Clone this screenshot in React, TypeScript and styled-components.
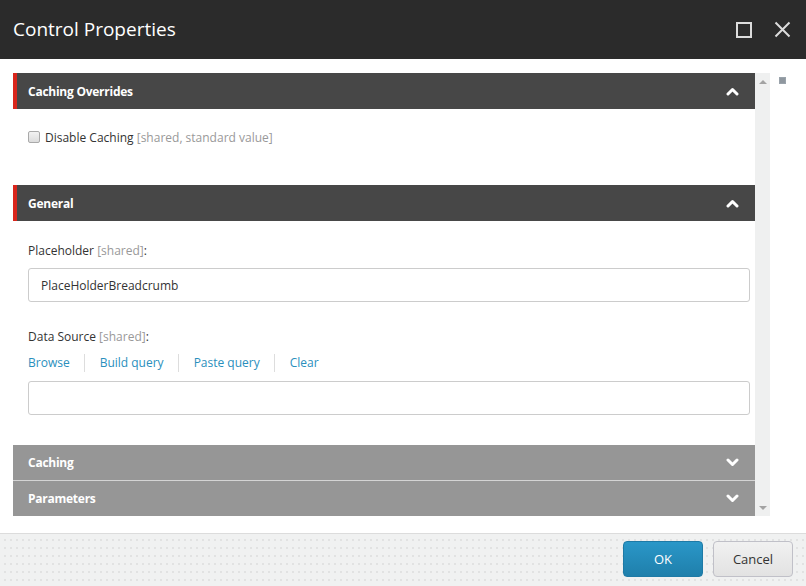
import React from 'react';
import styled, { createGlobalStyle } from 'styled-components';

const GlobalStyle = createGlobalStyle`
  html, body {
    margin: 0;
    padding: 0;
    background: #fff;
  }
  body {
    font-family: 'Open Sans', 'Noto Sans', sans-serif;
    color: #333;
  }
  * {
    box-sizing: border-box;
  }
`;

const Dialog = styled.div`
  width: 806px;
  height: 586px;
  display: flex;
  flex-direction: column;
  overflow: hidden;
`;

const Header = styled.div`
  height: 59px;
  flex-shrink: 0;
  background: #2b2b2b;
  display: flex;
  align-items: center;
  justify-content: space-between;
  padding: 0 15px 0 13px;
`;

const Title = styled.h1`
  margin: 0 0 2px;
  font-size: 19px;
  font-weight: 400;
  color: #fff;
`;

const HeaderTools = styled.div`
  display: flex;
  align-items: center;
  gap: 20px;
`;

const ToolButton = styled.button`
  width: 18px;
  height: 18px;
  padding: 0;
  border: 0;
  background: transparent;
  display: flex;
  align-items: center;
  justify-content: center;
  cursor: pointer;
`;

const Body = styled.div`
  flex: 1;
  background: #fff;
  display: flex;
  align-items: flex-start;
  padding: 14px 0 0 13px;
  gap: 9px;
`;

const ScrollPane = styled.div`
  width: 757px;
  height: 443px;
  display: flex;
`;

const Content = styled.div`
  width: 742px;
  overflow: hidden;
`;

const Scrollbar = styled.div`
  width: 15px;
  background: #eff0f0;
  display: flex;
  flex-direction: column;
  justify-content: space-between;
  align-items: center;
  padding: 7px 0 6px;
`;

const Arrow = styled.div<{ $down?: boolean }>`
  width: 0;
  height: 0;
  border-left: 4px solid transparent;
  border-right: 4px solid transparent;
  ${(p) =>
    p.$down
      ? 'border-top: 4px solid #a3a3a3;'
      : 'border-bottom: 4px solid #a3a3a3;'}
`;

const SideMark = styled.div`
  width: 7px;
  height: 7px;
  margin-top: 4px;
  background: #8f979f;
  border: 1px solid #9aa3ab;
`;

const SectionHeader = styled.div<{ $open?: boolean }>`
  height: 36px;
  flex-shrink: 0;
  display: flex;
  align-items: center;
  justify-content: space-between;
  padding: 0 16px 0 ${(p) => (p.$open ? '11px' : '15px')};
  background: ${(p) => (p.$open ? '#474747' : '#969696')};
  border-left: ${(p) => (p.$open ? '4px solid #d9261c' : 'none')};
  border-bottom: ${(p) => (p.$open ? 'none' : '1px solid #d4d4d4')};
  color: #fff;
  font-size: 12px;
  font-weight: 700;
  letter-spacing: -0.25px;
`;

const SectionBody = styled.div<{ $h: number }>`
  display: flow-root;
  height: ${(p) => p.$h}px;
  padding: 0 5px 0 15px;
`;

const CheckRow = styled.label`
  display: flex;
  align-items: center;
  gap: 5px;
  height: 56px;
  font-size: 12px;
  color: #333;
`;

const Box = styled.span`
  width: 12px;
  height: 12px;
  border: 1px solid #a9a9a9;
  border-radius: 2px;
  background: linear-gradient(#f2f2f2, #dcdcdc);
`;

const Muted = styled.span`
  color: #999;
`;

const Label = styled.div<{ $top: number }>`
  margin-top: ${(p) => p.$top}px;
  height: 18px;
  line-height: 18px;
  font-size: 12px;
  color: #333;
`;

const Field = styled.div<{ $top: number }>`
  margin-top: ${(p) => p.$top}px;
  height: 34px;
  border: 1px solid #ccc;
  border-radius: 3px;
  display: flex;
  align-items: center;
  padding-left: 12px;
  font-size: 12px;
  color: #333;
`;

const Links = styled.div`
  margin-top: 8px;
  display: flex;
  align-items: center;
  height: 18px;
`;

const LinkItem = styled.a<{ $first?: boolean }>`
  font-size: 12px;
  color: #2a8fbd;
  text-decoration: none;
  line-height: 18px;
  padding: 0 14px 0 ${(p) => (p.$first ? '0' : '15px')};
  border-left: ${(p) => (p.$first ? 'none' : '1px solid #ddd')};
  cursor: pointer;
`;

const Footer = styled.div`
  height: 53px;
  flex-shrink: 0;
  border-top: 1px solid #dcdcdc;
  background-color: #f0f1f1;
  background-image: radial-gradient(#dfe0e0 0.6px, transparent 0.8px);
  background-size: 6px 8px;
  background-position: 2px 2px;
  display: flex;
  align-items: center;
  justify-content: flex-end;
  gap: 10px;
  padding: 0 13px 3px 0;
`;

const Button = styled.button<{ $primary?: boolean }>`
  height: 36px;
  width: 80px;
  border-radius: 4px;
  font-family: inherit;
  font-size: 13px;
  cursor: pointer;
  color: ${(p) => (p.$primary ? '#fff' : '#333')};
  border: 1px solid ${(p) => (p.$primary ? '#1e7aa6' : '#c0c0c8')};
  background: ${(p) =>
    p.$primary
      ? 'linear-gradient(#2a97c8, #1f7fab)'
      : 'linear-gradient(#f1f1f1, #e2e2e2)'};
`;

const Chevron: React.FC<{ up?: boolean }> = ({ up }) => (
  <svg width="13" height="9" viewBox="0 0 13 9">
    <polyline
      points={up ? '2,7 6.5,2.5 11,7' : '2,2 6.5,6.5 11,2'}
      fill="none"
      stroke="#fff"
      strokeWidth="3"
      strokeLinecap="round"
      strokeLinejoin="round"
    />
  </svg>
);

const App: React.FC = () => {
  return (
    <>
      <GlobalStyle />
      <Dialog>
        <Header>
          <Title>Control Properties</Title>
          <HeaderTools>
            <ToolButton aria-label="Maximize">
              <svg width="16" height="16" viewBox="0 0 16 16">
                <rect x="1" y="1" width="14" height="14" fill="none" stroke="#dcdcdc" strokeWidth="2" />
              </svg>
            </ToolButton>
            <ToolButton aria-label="Close">
              <svg width="17" height="17" viewBox="0 0 17 17">
                <path d="M1.5 1.5 L15.5 15.5 M15.5 1.5 L1.5 15.5" stroke="#dcdcdc" strokeWidth="2" />
              </svg>
            </ToolButton>
          </HeaderTools>
        </Header>
        <Body>
          <ScrollPane>
            <Content>
              <SectionHeader $open>
                <span>Caching Overrides</span>
                <Chevron up />
              </SectionHeader>
              <SectionBody $h={76}>
                <CheckRow>
                  <Box />
                  <span>
                    Disable Caching <Muted>[shared, standard value]</Muted>
                  </span>
                </CheckRow>
              </SectionBody>
              <SectionHeader $open>
                <span>General</span>
                <Chevron up />
              </SectionHeader>
              <SectionBody $h={224}>
                <Label $top={21}>
                  Placeholder <Muted>[shared]</Muted>:
                </Label>
                <Field $top={8}>PlaceHolderBreadcrumb</Field>
                <Label $top={26}>
                  Data Source <Muted>[shared]</Muted>:
                </Label>
                <Links>
                  <LinkItem $first>Browse</LinkItem>
                  <LinkItem>Build query</LinkItem>
                  <LinkItem>Paste query</LinkItem>
                  <LinkItem>Clear</LinkItem>
                </Links>
                <Field $top={9} />
              </SectionBody>
              <SectionHeader>
                <span>Caching</span>
                <Chevron />
              </SectionHeader>
              <SectionHeader>
                <span>Parameters</span>
                <Chevron />
              </SectionHeader>
            </Content>
            <Scrollbar>
              <Arrow />
              <Arrow $down />
            </Scrollbar>
          </ScrollPane>
          <SideMark />
        </Body>
        <Footer>
          <Button $primary>OK</Button>
          <Button>Cancel</Button>
        </Footer>
      </Dialog>
    </>
  );
};

export default App;
